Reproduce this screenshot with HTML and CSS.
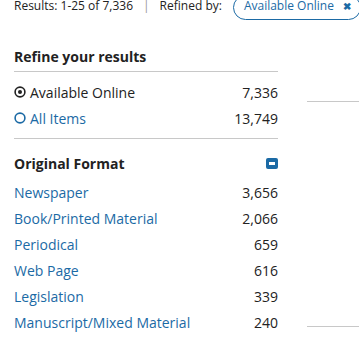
FILE: index.html
```html
<!DOCTYPE html>
<html lang="en">
<head>
    <meta charset="UTF-8">
    <meta name="viewport" content="width=device-width, initial-scale=1.0">
    <title>Search results</title>
    <link rel="stylesheet" href="styles.css">
</head>
<body>
    <div class="topbar">
        <span class="summary">Results: 1-25 of 7,336</span>
        <span class="sep">|</span>
        <span class="summary">Refined by:</span>
        <a class="pill" href="#">Available Online <span class="pill-x">&#10006;</span></a>
    </div>

    <div class="page">
        <div class="sidebar">
            <h2 class="refine-title">Refine your results</h2>
            <ul class="facet-list radio-list">
                <li class="facet">
                    <span class="radio-label current">
                        <svg class="radio" viewBox="0 0 12 12" width="12" height="12"><circle cx="6" cy="6" r="4.9" fill="none" stroke="#222" stroke-width="1.6"/><circle cx="6" cy="6" r="2" fill="#222"/></svg>
                        Available Online
                    </span>
                    <span class="count">7,336</span>
                </li>
                <li class="facet">
                    <a class="radio-label" href="#">
                        <svg class="radio" viewBox="0 0 12 12" width="12" height="12"><circle cx="6" cy="6" r="4.9" fill="none" stroke="#1b6aa5" stroke-width="1.6"/></svg>
                        All Items
                    </a>
                    <span class="count">13,749</span>
                </li>
            </ul>

            <div class="facet-head">
                <h3>Original Format</h3>
                <span class="toggle"></span>
            </div>
            <ul class="facet-list">
                <li class="facet"><a href="#">Newspaper</a><span class="count">3,656</span></li>
                <li class="facet"><a href="#">Book/Printed Material</a><span class="count">2,066</span></li>
                <li class="facet"><a href="#">Periodical</a><span class="count">659</span></li>
                <li class="facet"><a href="#">Web Page</a><span class="count">616</span></li>
                <li class="facet"><a href="#">Legislation</a><span class="count">339</span></li>
                <li class="facet"><a href="#">Manuscript/Mixed Material</a><span class="count">240</span></li>
            </ul>
        </div>
        <div class="results">
            <div class="result-rule first"></div>
            <div class="result-rule second"></div>
        </div>
    </div>
</body>
</html>
```

FILE: styles.css
```css
body {
    margin: 0;
    background-color: #fff;
    font-family: 'Open Sans', 'Noto Sans', sans-serif;
    color: #222;
    overflow: hidden;
}

a {
    color: #1b6aa5;
    text-decoration: none;
}

.topbar {
    display: flex;
    align-items: flex-start;
    height: 18px;
    padding-left: 14px;
    font-size: 12px;
    line-height: 12px;
    white-space: nowrap;
}

.sep {
    color: #999;
    margin: 0 10px;
}

.pill {
    display: flex;
    align-items: center;
    margin-top: -5px;
    margin-left: 11px;
    padding: 4px 9px 7px 10px;
    border: 1px solid #1b6aa5;
    border-radius: 13px;
}

.pill-x {
    margin-left: 9px;
    font-size: 10px;
    font-weight: bold;
}

.page {
    display: flex;
    padding-left: 14px;
}

.sidebar {
    width: 264px;
}

.refine-title {
    margin: 29px 0 0;
    padding-bottom: 4px;
    border-bottom: 1px solid #c8c8c8;
    font-size: 14px;
    font-weight: 700;
    line-height: 20px;
}

.facet-list {
    list-style: none;
    margin: 0;
    padding: 0;
}

.radio-list {
    padding: 7px 0;
    border-bottom: 1px solid #c8c8c8;
}

.facet {
    display: flex;
    justify-content: space-between;
    align-items: center;
    height: 26px;
    font-size: 14px;
}

.radio-label {
    display: flex;
    align-items: center;
}

.radio {
    margin-right: 4px;
}

.count {
    color: #222;
}

.facet-head {
    display: flex;
    justify-content: space-between;
    align-items: center;
    height: 26px;
    margin-top: 11px;
    margin-bottom: 3px;
}

.facet-head h3 {
    margin: 0;
    font-size: 14px;
    font-weight: 700;
}

.toggle {
    position: relative;
    width: 12px;
    height: 11px;
    border-radius: 2px;
    background-color: #1b6aa5;
}

.toggle::after {
    content: "";
    position: absolute;
    left: 3px;
    right: 3px;
    top: 4px;
    height: 3px;
    background-color: #fff;
}

.results {
    flex: 1;
    padding-left: 29px;
}

.result-rule {
    border-top: 1px solid #c8c8c8;
}

.result-rule.first {
    margin-top: 83px;
}

.result-rule.second {
    margin-top: 224px;
}
```
